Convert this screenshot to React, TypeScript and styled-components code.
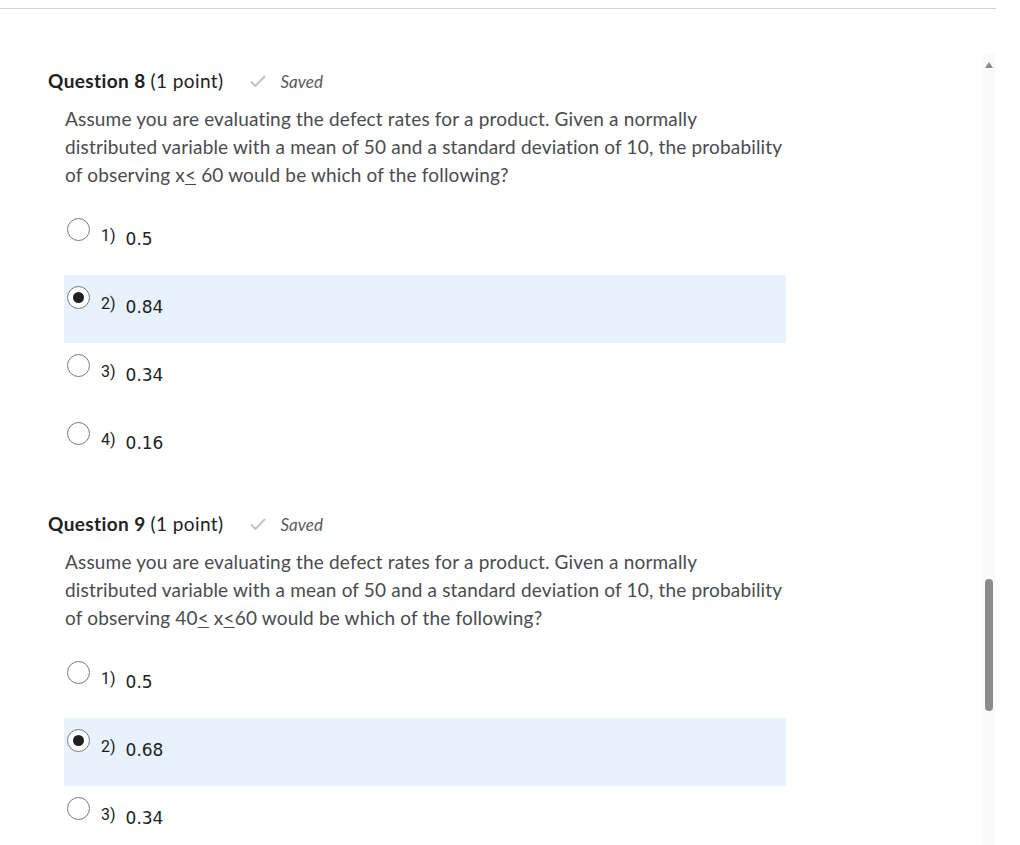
import React from "react";
import styled, { createGlobalStyle } from "styled-components";

const Global = createGlobalStyle`
  html, body { margin: 0; padding: 0; background: #ffffff; }
  body { font-family: Lato, "Noto Sans", sans-serif; color: #494c4e; }
`;

const Page = styled.div`
  width: 996px;
  height: 845px;
  overflow: hidden;
  padding-top: 8px;
  box-sizing: border-box;
`;

const TopRule = styled.div`
  height: 1px;
  background: #cdd5dc;
`;

const Body = styled.div`
  display: flex;
`;

const Main = styled.main`
  flex: 1;
  padding: 60px 0 0 48px;
`;

const ScrollCol = styled.div`
  width: 14px;
  margin-top: 45px;
  height: 800px;
  background: #fafafa;
  display: flex;
  flex-direction: column;
  align-items: center;
`;

const ArrowUp = styled.div`
  margin-top: 8px;
  width: 0;
  height: 0;
  border-left: 4px solid transparent;
  border-right: 4px solid transparent;
  border-bottom: 6px solid #8a8a8a;
`;

const Thumb = styled.div`
  margin-top: 511px;
  width: 8px;
  height: 132px;
  border-radius: 4px;
  background: #8a8a8a;
`;

const Question = styled.section`
  margin-bottom: 33px;
`;

const Header = styled.div`
  display: flex;
  align-items: baseline;
  height: 24px;
  color: #202122;
  font-size: 19px;
  letter-spacing: 0.4px;
`;

const QTitle = styled.span`
  font-weight: 700;
`;

const Points = styled.span`
  font-weight: 400;
  margin-left: 5px;
`;

const SavedBox = styled.span`
  display: inline-flex;
  align-items: center;
  margin-left: 26px;
  gap: 15px;
  font-style: italic;
  font-size: 17px;
  letter-spacing: 0;
  color: #565a5c;
  align-self: center;
`;

const Prompt = styled.p`
  margin: 12px 0 0 17px;
  width: 724px;
  font-size: 19px;
  letter-spacing: 0.17px;
  line-height: 28px;
  color: #494c4e;
`;

const Under = styled.span`
  text-decoration: underline;
  text-underline-offset: 2px;
`;

const Options = styled.div`
  margin-top: 18px;
  margin-left: 16px;
  width: 722px;
`;

const OptionRow = styled.div<{ $selected?: boolean }>`
  height: 68px;
  box-sizing: border-box;
  padding: 11px 0 0 3px;
  display: flex;
  align-items: flex-start;
  background: ${(p) => (p.$selected ? "#e8f2fc" : "transparent")};
`;

const Radio = styled.span<{ $checked?: boolean }>`
  width: 23px;
  height: 23px;
  box-sizing: border-box;
  border-radius: 50%;
  border: 1.5px solid #76797c;
  background: #fff;
  display: flex;
  align-items: center;
  justify-content: center;
  flex-shrink: 0;
  &::after {
    content: "";
    display: ${(p) => (p.$checked ? "block" : "none")};
    width: 11px;
    height: 11px;
    border-radius: 50%;
    background: #202122;
  }
`;

const OptNum = styled.span`
  margin-left: 11px;
  margin-top: 9px;
  font-family: Roboto, Arial, sans-serif;
  font-size: 16px;
  line-height: 18px;
  color: #202122;
`;

const OptVal = styled.span`
  margin-left: 10px;
  margin-top: 11px;
  font-family: "DejaVu Sans", Verdana, sans-serif;
  font-size: 17px;
  line-height: 21px;
  color: #202122;
`;

const Check = () => (
  <svg width="16" height="13" viewBox="0 0 16 13" fill="none">
    <path d="M1.5 7 L5.5 11 L14.5 1.5" stroke="#c1c5c8" strokeWidth="2" strokeLinecap="round" strokeLinejoin="round" />
  </svg>
);

type Opt = { n: number; v: string; sel?: boolean };

const QuestionBlock = ({ num, prompt, opts }: { num: number; prompt: React.ReactNode; opts: Opt[] }) => (
  <Question>
    <Header>
      <QTitle>Question {num}</QTitle>
      <Points>(1 point)</Points>
      <SavedBox>
        <Check />
        Saved
      </SavedBox>
    </Header>
    <Prompt>{prompt}</Prompt>
    <Options>
      {opts.map((o) => (
        <OptionRow key={o.n} $selected={o.sel}>
          <Radio $checked={o.sel} />
          <OptNum>{o.n})</OptNum>
          <OptVal>{o.v}</OptVal>
        </OptionRow>
      ))}
    </Options>
  </Question>
);

export default function App() {
  return (
    <>
      <Global />
      <Page>
        <TopRule />
        <Body>
          <Main>
            <QuestionBlock
              num={8}
              prompt={
                <>
                  Assume you are evaluating the defect rates for a product. Given a normally distributed variable with a
                  mean of 50 and a standard deviation of 10, the probability of observing x<Under>&lt;</Under> 60 would be
                  which of the following?
                </>
              }
              opts={[
                { n: 1, v: "0.5" },
                { n: 2, v: "0.84", sel: true },
                { n: 3, v: "0.34" },
                { n: 4, v: "0.16" },
              ]}
            />
            <QuestionBlock
              num={9}
              prompt={
                <>
                  Assume you are evaluating the defect rates for a product. Given a normally distributed variable with a
                  mean of 50 and a standard deviation of 10, the probability of observing 40<Under>&lt;</Under> x
                  <Under>&lt;</Under>60 would be which of the following?
                </>
              }
              opts={[
                { n: 1, v: "0.5" },
                { n: 2, v: "0.68", sel: true },
                { n: 3, v: "0.34" },
              ]}
            />
          </Main>
          <ScrollCol>
            <ArrowUp />
            <Thumb />
          </ScrollCol>
        </Body>
      </Page>
    </>
  );
}
